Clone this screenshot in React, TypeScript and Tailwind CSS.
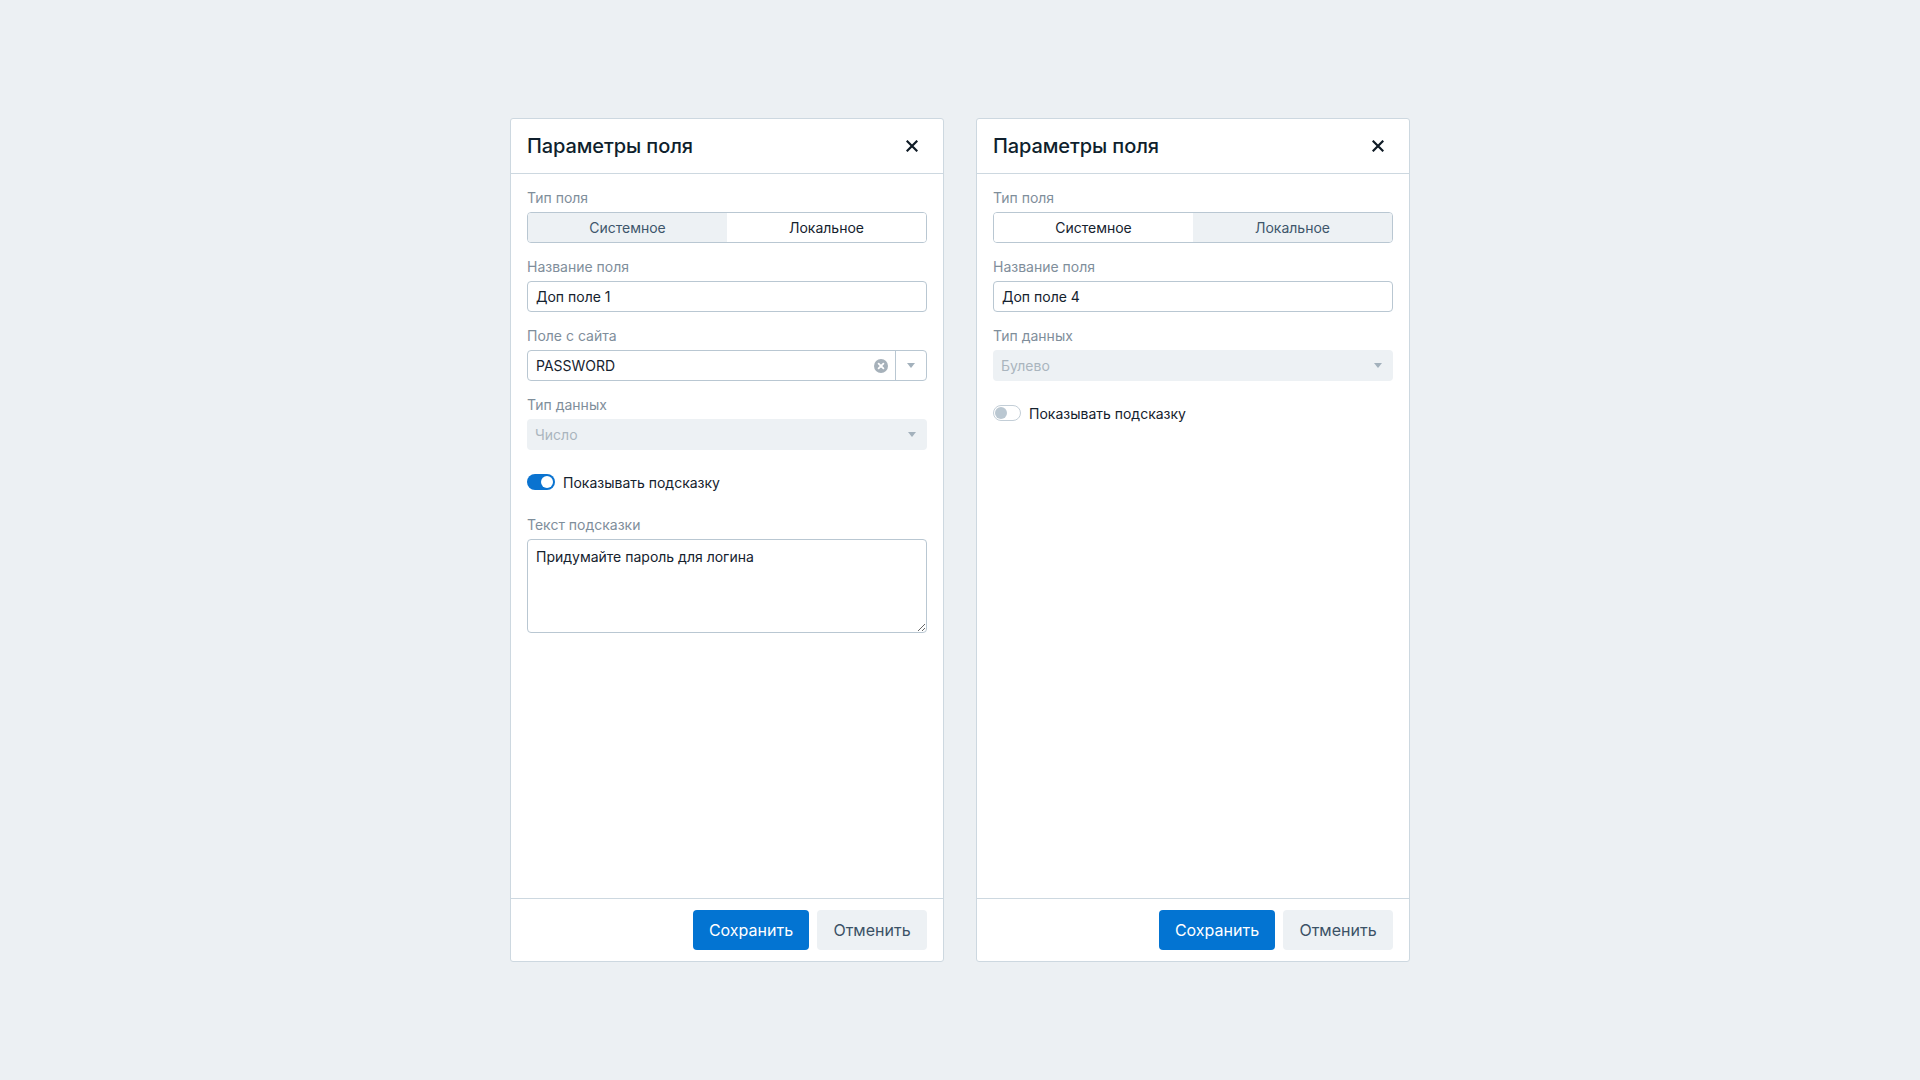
import { useState } from "react";

type Kind = "system" | "local";

function CloseIcon() {
  return (
    <svg viewBox="0 0 12 12" className="w-3 h-3">
      <path d="M1.5 1.5 L10.5 10.5 M10.5 1.5 L1.5 10.5" stroke="#0f1b26" strokeWidth="2.2" strokeLinecap="square" />
    </svg>
  );
}

function Caret() {
  return (
    <svg viewBox="0 0 8 5" className="w-2 h-[5px]">
      <path d="M0 0 L8 0 L4 5 Z" fill="#a3b1bc" />
    </svg>
  );
}

function ClearIcon() {
  return (
    <svg viewBox="0 0 14 14" className="w-[14px] h-[14px]">
      <circle cx="7" cy="7" r="7" fill="#a6b1ba" />
      <path d="M4.6 4.6 L9.4 9.4 M9.4 4.6 L4.6 9.4" stroke="#fff" strokeWidth="1.8" strokeLinecap="round" />
    </svg>
  );
}

function Label({ children }: { children: React.ReactNode }) {
  return <div className="text-[14px] leading-4 text-[#7f8e9b] mb-1.5">{children}</div>;
}

function Toggle({ on }: { on: boolean }) {
  return on ? (
    <div className="w-7 h-4 rounded-full bg-[#0a73d0] flex items-center justify-end pr-[2px]">
      <div className="w-3 h-3 rounded-full bg-white" />
    </div>
  ) : (
    <div className="w-7 h-4 rounded-full bg-white border border-[#c3ced7] flex items-center pl-[1px]">
      <div className="w-3 h-3 rounded-full bg-[#bac7d1]" />
    </div>
  );
}

function Segmented({ active }: { active: Kind }) {
  const base = "flex-1 flex items-center justify-center text-[14px]";
  return (
    <div className="flex h-[31px] rounded-[4px] border border-[#b9c7d2] overflow-hidden">
      <div className={`${base} ${active === "system" ? "bg-[#edf1f4] text-[#3e566b]" : "bg-white text-[#15222e]"}`}>
        Системное
      </div>
      <div className={`${base} ${active === "local" ? "bg-[#edf1f4] text-[#3e566b]" : "bg-white text-[#15222e]"}`}>
        Локальное
      </div>
    </div>
  );
}

function FieldPanel({
  kind,
  name,
  siteField,
  dataType,
  hint,
}: {
  kind: Kind;
  name: string;
  siteField?: string;
  dataType: string;
  hint?: string;
}) {
  const [hintText, setHintText] = useState(hint ?? "");

  return (
    <div className="w-[434px] h-[844px] bg-white border border-[#cdd8e0] rounded-[3px] flex flex-col">
      <div className="h-[55px] shrink-0 border-b border-[#cdd8e0] flex items-center justify-between pl-4 pr-[25px]">
        <h2 className="text-[20px] font-medium text-[#0f1f2d] tracking-[-0.1px]">Параметры поля</h2>
        <CloseIcon />
      </div>

      <div className="flex-1 px-4 pt-4 flex flex-col">
        <div>
          <Label>Тип поля</Label>
          <Segmented active={kind} />
        </div>

        <div className="mt-4">
          <Label>Название поля</Label>
          <div className="h-[31px] rounded-[4px] border border-[#b9c7d2] flex items-center px-2 text-[14px] text-[#15222e]">
            {name}
          </div>
        </div>

        {siteField && (
          <div className="mt-4">
            <Label>Поле с сайта</Label>
            <div className="h-[31px] rounded-[4px] border border-[#b9c7d2] flex items-center text-[14px] text-[#15222e]">
              <div className="flex-1 pl-2">{siteField}</div>
              <div className="px-[7px] flex items-center">
                <ClearIcon />
              </div>
              <div className="w-[31px] h-full border-l border-[#b9c7d2] flex items-center justify-center">
                <Caret />
              </div>
            </div>
          </div>
        )}

        <div className="mt-4">
          <Label>Тип данных</Label>
          <div className="h-[31px] rounded-[4px] bg-[#edf1f4] flex items-center justify-between pl-2 pr-[11px] text-[14px] text-[#aab5be]">
            <span>{dataType}</span>
            <Caret />
          </div>
        </div>

        <div className="mt-[22px] flex items-center gap-2 h-5">
          <Toggle on={!!hint} />
          <span className="text-[14px] text-[#15222e]">Показывать подсказку</span>
        </div>

        {hint && (
          <div className="mt-[25px]">
            <Label>Текст подсказки</Label>
            <textarea
              value={hintText}
              onChange={(e) => setHintText(e.target.value)}
              className="block w-full h-[94px] rounded-[4px] border border-[#b9c7d2] px-2 py-[7px] text-[14px] leading-5 text-[#15222e] outline-none"
            />
          </div>
        )}
      </div>

      <div className="shrink-0 border-t border-[#cdd8e0] h-[63px] flex items-center justify-end gap-2 px-4">
        <button className="h-10 w-[116px] rounded-[4px] bg-[#0374d2] text-white text-[16px]">Сохранить</button>
        <button className="h-10 w-[110px] rounded-[4px] bg-[#edf1f4] text-[#3b5266] text-[16px]">Отменить</button>
      </div>
    </div>
  );
}

export default function App() {
  return (
    <div
      className="w-full h-screen bg-[#ecf0f3] flex items-center justify-center gap-8"
      style={{ fontFamily: "Inter, 'Noto Sans', sans-serif" }}
    >
      <FieldPanel
        kind="system"
        name="Доп поле 1"
        siteField="PASSWORD"
        dataType="Число"
        hint="Придумайте пароль для логина"
      />
      <FieldPanel kind="local" name="Доп поле 4" dataType="Булево" />
    </div>
  );
}
